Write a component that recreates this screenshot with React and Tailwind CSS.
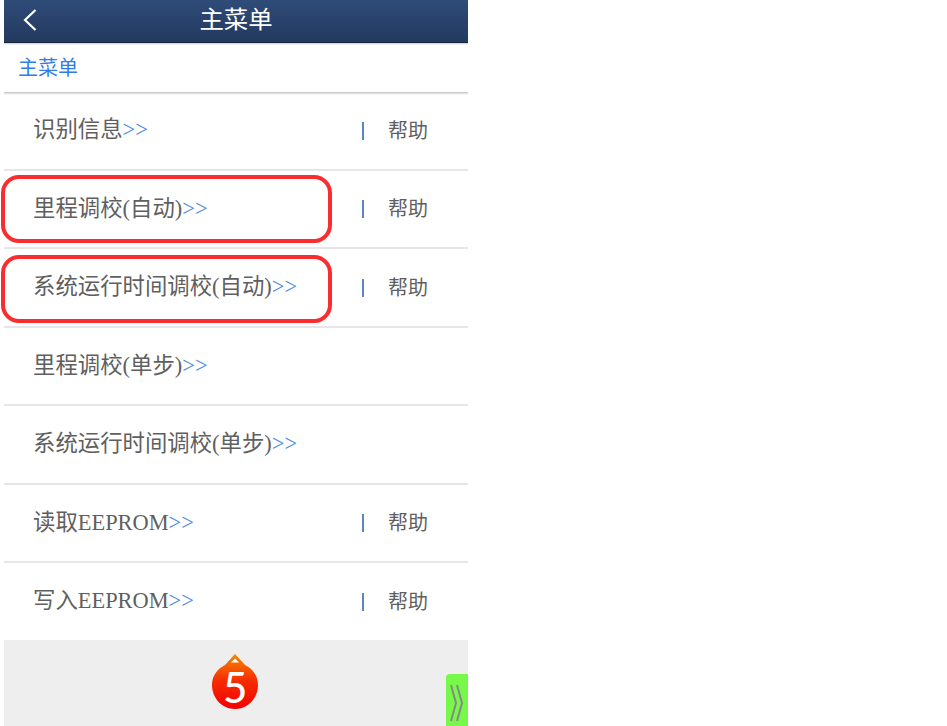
import React from "react";

const rows = [
  { label: "识别信息", help: true, pad: "h-[76px] pb-[3px]" },
  { label: "里程调校(自动)", help: true, box: "top-[4px]" },
  { label: "系统运行时间调校(自动)", help: true, box: "top-[5.6px]" },
  { label: "里程调校(单步)" },
  { label: "系统运行时间调校(单步)" },
  { label: "读取EEPROM", help: true },
  { label: "写入EEPROM", help: true, pad: "h-[77.4px]" },
];

const font = "font-['Liberation_Serif','Noto_Sans_CJK_SC',serif]";

function Row({ row }) {
  return (
    <div className={`relative flex items-center border-b-2 border-[#e6e6e6] last:border-b-0 pl-[29px] ${row.pad || "h-[78.4px]"}`}>
      <div className="text-[22.4px] text-[#5f5f5f] leading-none">
        {row.label}
        <span className="text-[#4a8ae0]">&gt;&gt;</span>
      </div>
      {row.help && (
        <div className="ml-auto flex items-center pr-[40px]">
          <span className="w-[2px] h-[18px] bg-[#5b86c0] mr-[24px]"></span>
          <span className="text-[20px] text-[#5f5f5f] leading-none">帮助</span>
        </div>
      )}
      {row.box && (
        <div className={`absolute left-[-3px] w-[331px] h-[68px] rounded-[18px] border-4 border-[#fb2c30] ${row.box}`}></div>
      )}
    </div>
  );
}

export default function App() {
  return (
    <div className={`h-[726px] w-[947px] overflow-hidden bg-white ${font}`}>
      <div className="ml-[4px] w-[464px]">
        {/* HEADER */}
        <div className="relative z-20 flex h-[43px] items-center justify-center bg-gradient-to-b from-[#2f4b78] to-[#233a5f] border-b border-[#16263f]">
          <svg className="absolute left-[17px] top-[8px]" width="18" height="24" viewBox="0 0 18 24" fill="none">
            <path d="M14.5 2 L4 12 L14.5 22" stroke="#fff" strokeWidth="2.2" />
          </svg>
          <span className="text-[24.4px] text-white leading-none pb-[2px]">主菜单</span>
        </div>
        <div className="h-[2px] bg-gradient-to-b from-[#c8c8c8] to-white"></div>

        {/* BREADCRUMB */}
        <div className="flex h-[47px] items-center pl-[14px] pb-[1px]">
          <span className="text-[20px] text-[#2f7de8] leading-none">主菜单</span>
        </div>
        <div className="h-[3px] bg-gradient-to-b from-[#c4c4c4] to-white"></div>

        {/* LIST */}
        <div className="flex flex-col">
          {rows.map((row, i) => (
            <Row key={i} row={row} />
          ))}
        </div>

        {/* FOOTER */}
        <div className="relative flex h-[86px] justify-center bg-[#eeeeee] pt-[13px]">
          <svg width="48" height="58" viewBox="0 0 48 58" className="-ml-[2px]">
            <defs>
              <linearGradient id="drop" x1="0" y1="0" x2="0" y2="1">
                <stop offset="0" stopColor="#f58a00" />
                <stop offset="0.5" stopColor="#f52a00" />
                <stop offset="1" stopColor="#f50000" />
              </linearGradient>
            </defs>
            <path d="M24 1 L34 12 C42 16 47 23 47 32 C47 45 37 56 24 56 C11 56 1 45 1 32 C1 23 6 16 14 12 Z" fill="url(#drop)" />
            <path d="M24 5.5 L28 9.5 L20 9.5 Z" fill="#fff" />
          </svg>
          <span className="absolute left-1/2 top-[24px] -translate-x-[13px] font-['Lato',sans-serif] font-medium text-[42px] leading-[46px] text-white">5</span>
          <div className="absolute right-0 top-[34px] flex h-[52px] w-[22px] items-center justify-center rounded-tl-[4px] bg-[#77f94a]">
            <svg width="14" height="38" viewBox="0 0 14 38" fill="none" className="mt-[6px]">
              <path d="M1 1 L6 19 L1 37 M7 1 L12 19 L7 37" stroke="#888" strokeWidth="2" />
            </svg>
          </div>
        </div>
      </div>
    </div>
  );
}
